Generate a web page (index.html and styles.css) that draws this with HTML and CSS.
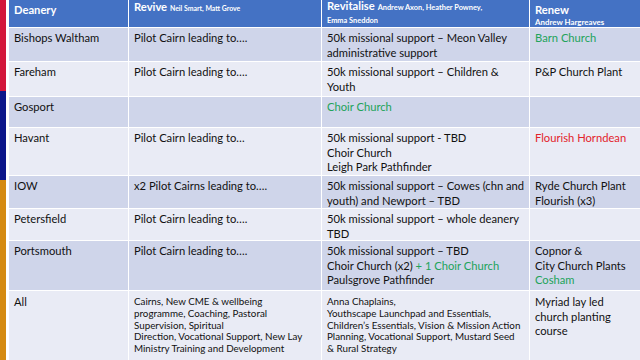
FILE: index.html
```html
<!DOCTYPE html>
<html lang="en">
<head>
<meta charset="utf-8">
<title>Deanery missional support</title>
<link rel="stylesheet" href="styles.css">
</head>
<body>
<div class="page">
  <div class="stripe">
    <div class="band red"></div>
    <div class="band navy"></div>
    <div class="band orange"></div>
  </div>
  <div class="grid">
    <div class="cell head head-a"><span class="h">Deanery</span></div>
    <div class="cell head head-b"><span class="h">Revive</span> <span class="names names-b">Neil Smart, Matt Grove</span></div>
    <div class="cell head head-c"><span class="h">Revitalise</span> <span class="names names-c">Andrew Axon, Heather Powney,<br>Emma Sneddon</span></div>
    <div class="cell head head-d"><span class="h">Renew</span><span class="names names-d">Andrew Hargreaves</span></div>

    <div class="cell dark">Bishops Waltham</div>
    <div class="cell dark">Pilot Cairn leading to….</div>
    <div class="cell dark">50k missional support – Meon Valley administrative support</div>
    <div class="cell dark green">Barn Church</div>

    <div class="cell light">Fareham</div>
    <div class="cell light">Pilot Cairn leading to….</div>
    <div class="cell light">50k missional support – Children &amp; Youth</div>
    <div class="cell light">P&amp;P Church Plant</div>

    <div class="cell dark">Gosport</div>
    <div class="cell dark"></div>
    <div class="cell dark green">Choir Church</div>
    <div class="cell dark"></div>

    <div class="cell light">Havant</div>
    <div class="cell light">Pilot Cairn leading to…</div>
    <div class="cell light">50k missional support - TBD<br>Choir Church<br>Leigh Park Pathfinder</div>
    <div class="cell light red-text">Flourish Horndean</div>

    <div class="cell dark">IOW</div>
    <div class="cell dark">x2 Pilot Cairns leading to….</div>
    <div class="cell dark">50k missional support – Cowes (chn and youth) and Newport – TBD</div>
    <div class="cell dark">Ryde Church Plant<br>Flourish (x3)</div>

    <div class="cell light">Petersfield</div>
    <div class="cell light">Pilot Cairn leading to….</div>
    <div class="cell light">50k missional support – whole deanery TBD</div>
    <div class="cell light"></div>

    <div class="cell dark">Portsmouth</div>
    <div class="cell dark">Pilot Cairn leading to….</div>
    <div class="cell dark">50k missional support – TBD<br>Choir Church (x2) <span class="green">+ 1 Choir Church</span><br>Paulsgrove Pathfinder</div>
    <div class="cell dark">Copnor &amp;<br>City Church Plants<br><span class="green">Cosham</span></div>

    <div class="cell light last">All</div>
    <div class="cell light last small">Cairns, New CME &amp; wellbeing<br>programme, Coaching, Pastoral<br>Supervision, Spiritual<br>Direction, Vocational Support, New Lay<br>Ministry Training and Development</div>
    <div class="cell light last small">Anna Chaplains,<br>Youthscape Launchpad and Essentials,<br>Children’s Essentials, Vision &amp; Mission Action<br>Planning, Vocational Support, Mustard Seed<br>&amp; Rural Strategy</div>
    <div class="cell light last">Myriad lay led church planting course</div>
  </div>
</div>
</body>
</html>
```
FILE: styles.css
```css
* { box-sizing: border-box; }
html, body { margin: 0; padding: 0; background: #ffffff; }
body {
  width: 640px;
  height: 360px;
  overflow: hidden;
  font-family: Lato, "Liberation Sans", sans-serif;
  color: #111111;
}
.page {
  display: flex;
  gap: 3px;
  height: 360px;
}
.stripe {
  width: 6px;
  display: flex;
  flex-direction: column;
}
.band.red { height: 91px; background: #d3163a; }
.band.navy { height: 89px; background: #0c168a; }
.band.orange { flex: 1; background: #d58a10; }
.grid {
  flex: 1;
  display: grid;
  grid-template-columns: 119px 192px 207px 1fr;
  grid-template-rows: 27px 33px 34px 30px 47px 32px 31px 49px 1fr;
  gap: 1px;
  background: #ffffff;
}
.cell {
  padding: 3px 1px 0 5px;
  font-size: 11.2px;
  line-height: 14.5px;
  overflow: hidden;
}
.cell.last { padding-top: 4px; }
.head {
  background: #4472c4;
  color: #ffffff;
}
.head-a { padding-top: 3px; line-height: 14px; }
.head-b { padding-top: 0; line-height: 13px; }
.head-c { padding-top: 0; line-height: 12px; }
.head-d { padding-top: 3px; line-height: 14px; }
.h { font-weight: 700; font-size: 11.2px; }
.names { font-weight: 700; line-height: 10px; }
.names-b { font-size: 6.9px; }
.names-c { font-size: 7.4px; }
.names-d { display: block; font-size: 7.9px; line-height: 10px; }
.dark { background: #cfd5ea; }
.light { background: #e9ebf5; }
.green { color: #22a35a; }
.red-text { color: #e3232b; }
.cell.small { font-size: 9.8px; line-height: 11.8px; padding-top: 5px; white-space: nowrap; }
```
